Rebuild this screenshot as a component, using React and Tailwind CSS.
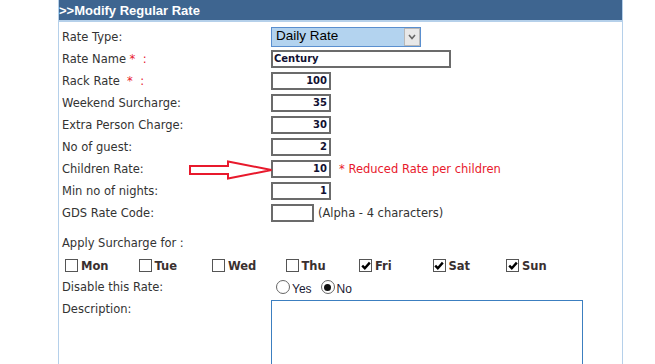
import React from "react";

const V = { fontFamily: '"DejaVu Sans", Verdana, sans-serif' };

function Label({ children }) {
  return (
    <div className="w-[212px] shrink-0 pl-[3px] pt-[2px] text-[11.5px] text-[#333]" style={V}>
      {children}
    </div>
  );
}

function NumInput({ value }) {
  return (
    <div
      className="w-[60px] h-[18px] border-2 border-[#6b6b6b] bg-white flex items-center justify-end pr-[2px] text-[10px] font-bold text-[#111133] leading-none"
      style={V}
    >
      {value}
    </div>
  );
}

function Row({ label, children, h = "h-[22px]" }) {
  return (
    <div className={`flex items-center ${h}`}>
      <Label>{label}</Label>
      <div className="flex items-center">{children}</div>
    </div>
  );
}

function Check({ label, checked }) {
  return (
    <div className="w-[73.5px] flex items-center">
      <span className="w-[13px] h-[13px] border border-[#555] bg-white flex items-center justify-center">
        {checked && (
          <svg width="10" height="9" viewBox="0 0 10 9">
            <path d="M1.2 4.6 L3.8 7.2 L8.8 1.6" stroke="#000" strokeWidth="2.4" fill="none" />
          </svg>
        )}
      </span>
      <span className="ml-[3px] text-[11.5px] font-bold text-[#3a3030] mt-[3px]" style={V}>
        {label}
      </span>
    </div>
  );
}

function Radio({ label, checked }) {
  return (
    <div className="flex items-center mr-[9px]">
      <span className="w-[14px] h-[14px] rounded-full border border-[#666] bg-white flex items-center justify-center">
        {checked && <span className="w-[7px] h-[7px] rounded-full bg-[#111]" />}
      </span>
      <span
        className="ml-[2px] mt-[3px] text-[12px] text-[#1a1a33]"
        style={{ fontFamily: '"Liberation Sans", Arial, sans-serif' }}
      >
        {label}
      </span>
    </div>
  );
}

export default function App() {
  const red = "text-[#e8192c]";
  return (
    <div className="w-[655px] h-[364px] bg-white overflow-hidden relative">
      <div className="ml-[58px] w-[565px] h-[364px] border-x border-[#b5d0ea]">
        <div
          className="h-[20px] bg-[#3e6590] text-white text-[13px] font-bold flex items-center pl-0 leading-none"
          style={{ fontFamily: '"Liberation Sans", Arial, sans-serif' }}
        >
          &gt;&gt;Modify Regular Rate
        </div>
        <div className="h-[2px] bg-[#b5d0ea]" />

        <div className="pt-[3px]">
          <Row label="Rate Type:" h="h-[23px]">
            <div className="w-[150px] h-[20px] border border-[#5a8fcf] bg-[#b3d3ef] flex items-center justify-between">
              <span
                className="pl-[4px] text-[13.5px] text-black"
                style={{ fontFamily: '"Liberation Sans", Arial, sans-serif' }}
              >
                Daily Rate
              </span>
              <span className="w-[16px] h-[18px] bg-[#e8e8e8] border border-[#b8b8b8] flex items-center justify-center">
                <svg width="8" height="6" viewBox="0 0 8 6">
                  <path d="M1 1 L4 4.5 L7 1" stroke="#666" strokeWidth="1.6" fill="none" />
                </svg>
              </span>
            </div>
          </Row>
          <Row
            label={
              <>
                Rate Name <span className={red}>*</span>&nbsp;&nbsp;<span className={red}>:</span>
              </>
            }
          >
            <div
              className="w-[180px] h-[18px] border-2 border-[#6b6b6b] bg-white flex items-center pl-[1px] text-[10px] font-bold text-[#111133] leading-none"
              style={V}
            >
              Century
            </div>
          </Row>
          <Row
            label={
              <>
                Rack Rate&nbsp; <span className={red}>*</span>&nbsp;&nbsp;<span className={red}>:</span>
              </>
            }
          >
            <NumInput value="100" />
          </Row>
          <Row label="Weekend Surcharge:">
            <NumInput value="35" />
          </Row>
          <Row label="Extra Person Charge:">
            <NumInput value="30" />
          </Row>
          <Row label="No of guest:">
            <NumInput value="2" />
          </Row>
          <div className="relative">
            <Row label="Children Rate:">
              <NumInput value="10" />
              <span className={`ml-[8px] pt-[2px] text-[11.5px] ${red}`} style={V}>
                * Reduced Rate per children
              </span>
            </Row>
            <svg
              className="absolute left-[130px] top-[2px]"
              width="86"
              height="20"
              viewBox="0 0 86 20"
            >
              <polygon
                points="1,6 39,6 39,1.5 82.5,10 39,18.5 39,14 1,14"
                fill="white"
                stroke="#e8192c"
                strokeWidth="2"
              />
            </svg>
          </div>
          <Row label="Min no of nights:">
            <NumInput value="1" />
          </Row>
          <Row label="GDS Rate Code:">
            <div className="w-[43px] h-[18px] border-2 border-[#6b6b6b] bg-white" />
            <span className="ml-[4px] pt-[2px] text-[11.5px] text-[#333]" style={V}>
              (Alpha - 4 characters)
            </span>
          </Row>

          <div className="h-[8px]" />
          <div className="h-[22px] flex items-center">
            <Label>Apply Surcharge for :</Label>
          </div>
          <div className="h-[22px] flex items-center pl-[6px]">
            <Check label="Mon" />
            <Check label="Tue" />
            <Check label="Wed" />
            <Check label="Thu" />
            <Check label="Fri" checked />
            <Check label="Sat" checked />
            <Check label="Sun" checked />
          </div>
          <Row label="Disable this Rate:">
            <div className="pl-[5px] flex items-center">
              <Radio label="Yes" />
              <Radio label="No" checked />
            </div>
          </Row>
          <div className="flex items-start pt-[1px]">
            <Label>Description:</Label>
            <div className="mt-[1px] w-[312px] h-[80px] border border-[#3c7fc0] bg-white" />
          </div>
        </div>
      </div>
    </div>
  );
}
